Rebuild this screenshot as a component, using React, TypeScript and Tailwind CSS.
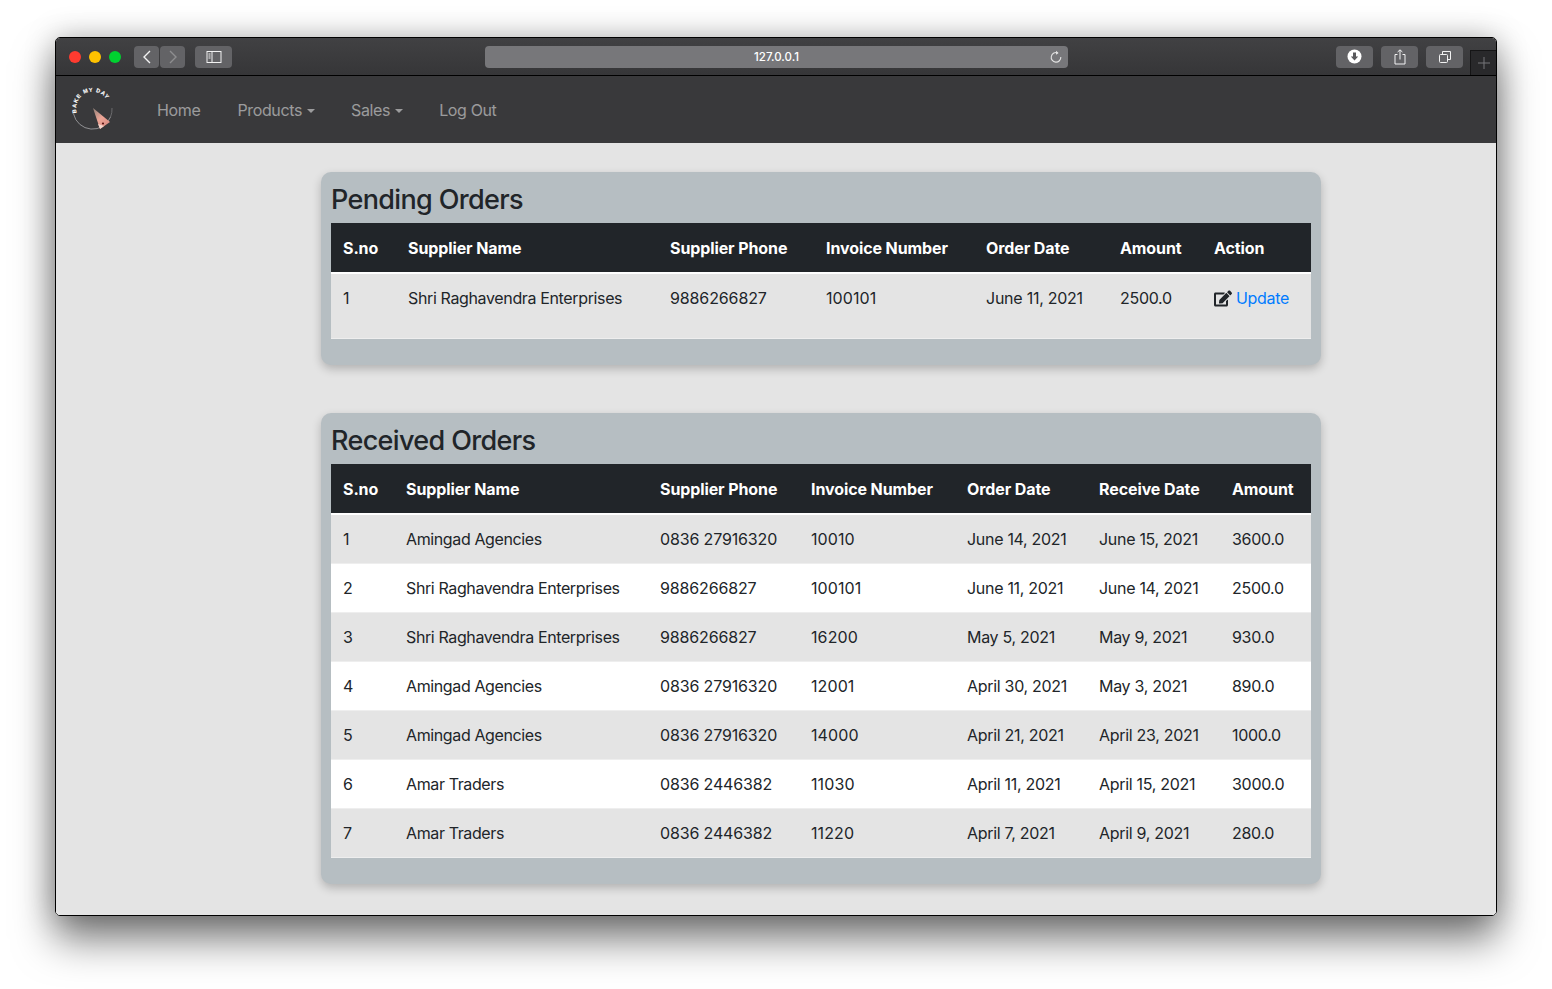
import React from 'react';
import { FaEdit } from 'react-icons/fa';

const pendingCols = ['w-[65px]', 'w-[262px]', 'w-[156px]', 'w-[160px]', 'w-[134px]', 'w-[94px]', 'w-[109px]'];
const receivedCols = ['w-[63px]', 'w-[254px]', 'w-[151px]', 'w-[156px]', 'w-[132px]', 'w-[133px]', 'w-[91px]'];

// body text in the shot runs a little tighter than the installed Inter
const pendingTrack = ['', 'tracking-[-0.36px]', 'tracking-[-0.12px]', 'tracking-[0.1px]', 'tracking-[-0.25px]', 'tracking-[-0.3px]'];
const receivedTrack = ['', 'tracking-[-0.38px]', 'tracking-[-0.15px]', 'tracking-[0.1px]', 'tracking-[-0.3px]', 'tracking-[-0.3px]', 'tracking-[-0.3px]'];

const pendingHead = ['S.no', 'Supplier Name', 'Supplier Phone', 'Invoice Number', 'Order Date', 'Amount', 'Action'];
const receivedHead = ['S.no', 'Supplier Name', 'Supplier Phone', 'Invoice Number', 'Order Date', 'Receive Date', 'Amount'];

const received = [
  ['1', 'Amingad Agencies', '0836 27916320', '10010', 'June 14, 2021', 'June 15, 2021', '3600.0'],
  ['2', 'Shri Raghavendra Enterprises', '9886266827', '100101', 'June 11, 2021', 'June 14, 2021', '2500.0'],
  ['3', 'Shri Raghavendra Enterprises', '9886266827', '16200', 'May 5, 2021', 'May 9, 2021', '930.0'],
  ['4', 'Amingad Agencies', '0836 27916320', '12001', 'April 30, 2021', 'May 3, 2021', '890.0'],
  ['5', 'Amingad Agencies', '0836 27916320', '14000', 'April 21, 2021', 'April 23, 2021', '1000.0'],
  ['6', 'Amar Traders', '0836 2446382', '11030', 'April 11, 2021', 'April 15, 2021', '3000.0'],
  ['7', 'Amar Traders', '0836 2446382', '11220', 'April 7, 2021', 'April 9, 2021', '280.0'],
];

const ToolButton: React.FC<{ className?: string; children: React.ReactNode }> = ({ className = '', children }) => (
  <div className={`flex h-[22px] items-center justify-center rounded-[4px] bg-[#636366] ${className}`}>{children}</div>
);

const TitleBar: React.FC = () => (
  <div className="relative flex h-[38px] shrink-0 items-center border-b border-black bg-gradient-to-b from-[#414143] to-[#363638] pl-[13px]">
    <span className="h-3 w-3 rounded-full bg-[#ff3b30]" />
    <span className="ml-2 h-3 w-3 rounded-full bg-[#ffc200]" />
    <span className="ml-2 h-3 w-3 rounded-full bg-[#00d130]" />
    <ToolButton className="ml-[13px] w-[25px]">
      <svg width="10" height="14" viewBox="0 0 10 14" fill="none" stroke="#f2f2f2" strokeWidth="1.4">
        <path d="M8 1 L2 7 L8 13" />
      </svg>
    </ToolButton>
    <ToolButton className="ml-px w-[25px]">
      <svg width="10" height="14" viewBox="0 0 10 14" fill="none" stroke="#8e8e90" strokeWidth="1.4">
        <path d="M2 1 L8 7 L2 13" />
      </svg>
    </ToolButton>
    <ToolButton className="ml-2.5 w-[37px]">
      <svg width="16" height="12" viewBox="0 0 16 12" fill="none" stroke="#f2f2f2" strokeWidth="1">
        <rect x="1" y="0.5" width="14" height="11" />
        <path d="M6 0.5 V11.5 M2.5 3 H4.5 M2.5 5 H4.5 M2.5 7 H4.5" />
      </svg>
    </ToolButton>
    <div className="relative ml-[253px] flex h-[22px] w-[583px] items-center justify-center rounded-[4px] bg-[#77777a] pt-0.5 font-medium text-white">
      <span className="text-[11.5px]">127.0.0.1</span>
      <svg className="absolute right-[5px] top-[4px]" width="14" height="14" viewBox="0 0 14 14" fill="none" stroke="#e2e2e2" strokeWidth="1.1">
        <path d="M8.8 2.9 A4.8 4.8 0 1 0 11.8 7" />
        <path d="M7 0.8 L9.6 2.9 L7 4.8" fill="#e2e2e2" stroke="none" />
      </svg>
    </div>
    <ToolButton className="ml-[268px] w-[37px]">
      <svg width="15" height="15" viewBox="0 0 15 15">
        <circle cx="7.5" cy="7.5" r="7" fill="#fff" />
        <path d="M6 3.5 H9 V7.5 H11.2 L7.5 11.5 L3.8 7.5 H6 Z" fill="#59595c" />
      </svg>
    </ToolButton>
    <ToolButton className="ml-2 w-[37px]">
      <svg width="12" height="16" viewBox="0 0 12 16" fill="none" stroke="#f2f2f2" strokeWidth="1">
        <path d="M3.5 5.5 H1 V15 H11 V5.5 H8.5" />
        <path d="M6 10.5 V1 M3.6 3 L6 0.8 L8.4 3" />
      </svg>
    </ToolButton>
    <ToolButton className="ml-2 w-[37px]">
      <svg width="12" height="12" viewBox="0 0 12 12" fill="none" stroke="#f2f2f2" strokeWidth="1">
        <rect x="0.5" y="3.5" width="8" height="8" rx="1" />
        <path d="M3.5 3.5 V0.5 H11.5 V8.5 H8.5" />
      </svg>
    </ToolButton>
    <div className="absolute bottom-0 right-0 flex h-[25px] w-[26px] items-center justify-center border-l border-t border-[#151516] bg-[#29292b]">
      <svg width="12" height="12" viewBox="0 0 12 12" stroke="#77777a" strokeWidth="1">
        <path d="M6 0 V12 M0 6 H12" />
      </svg>
    </div>
  </div>
);

const Logo: React.FC = () => (
  <svg width="44" height="44" viewBox="0 0 44 44" className="shrink-0 overflow-visible">
    <defs>
      <path id="logo-arc" d="M5.74 24.8 A16 16 0 0 1 37.4 15.5" />
      <linearGradient id="logo-slice" x1="0" y1="0" x2="0.7" y2="1">
        <stop offset="0" stopColor="#8f8078" />
        <stop offset="0.55" stopColor="#eda596" />
        <stop offset="1" stopColor="#d98a80" />
      </linearGradient>
    </defs>
    <path d="M2.6 26 A19.4 19.4 0 0 0 39.5 29" fill="none" stroke="#a6a6a8" strokeWidth="0.8" />
    <path d="M39.5 29 A19.4 19.4 0 0 0 41 20" fill="none" stroke="#77777a" strokeWidth="0.8" />
    <text fill="#fff" stroke="#fff" strokeWidth="0.15" fontSize="5.5" fontWeight="700" style={{ letterSpacing: '0.85px' }} fontFamily="'Liberation Sans', sans-serif">
      <textPath href="#logo-arc">BAKE MY DAY</textPath>
    </text>
    <path d="M22 20 L39 34 L29 41 Z" fill="url(#logo-slice)" />
    <path d="M27 36 L29 41 L33 38 Z" fill="#f3d5cc" />
    <circle cx="32" cy="35.5" r="1.1" fill="#5a1515" />
  </svg>
);

const Caret: React.FC = () => (
  <span className="ml-[5px] inline-block align-[3px] border-x-[4px] border-t-[4px] border-x-transparent border-t-current" />
);

const NavBar: React.FC = () => (
  <nav className="flex h-[67px] shrink-0 items-center bg-[#39393b] pl-[15px] text-base tracking-[-0.36px] text-white/50">
    <Logo />
    <a className="ml-[42px]">Home</a>
    <a className="ml-[37px]">
      Products
      <Caret />
    </a>
    <a className="ml-[36px]">
      Sales
      <Caret />
    </a>
    <a className="ml-[36px]">Log Out</a>
  </nav>
);

const HeadRow: React.FC<{ cols: string[]; labels: string[]; h: string }> = ({ cols, labels, h }) => (
  <thead>
    <tr className={`bg-[#212529] text-left text-white ${h}`}>
      {labels.map((label, i) => (
        <th key={label} className={`${cols[i]} border-b-2 border-white px-3 font-bold tracking-[-0.1px]`}>
          {label}
        </th>
      ))}
    </tr>
  </thead>
);

const Card: React.FC<{ title: string; children: React.ReactNode; className?: string }> = ({ title, children, className = '' }) => (
  <section className={`w-[1000px] rounded-[10px] bg-[#b6bec2] px-2.5 shadow-[0_4px_10px_rgba(0,0,0,0.22)] ${className}`}>
    <h2 className="flex h-[51px] items-center pt-[3px] text-[27px] font-medium leading-none tracking-[-0.65px] text-[#212529]">{title}</h2>
    {children}
  </section>
);

export default function App() {
  return (
    <div className="h-[989px] w-full overflow-hidden bg-white pl-[55px] pt-[37px] font-['Inter',sans-serif] text-[#212529]">
      <div className="flex h-[879px] w-[1442px] flex-col overflow-hidden rounded-[5px] border border-black shadow-[0_24px_40px_rgba(0,0,0,0.5),0_0_30px_rgba(0,0,0,0.25)]">
        <TitleBar />
        <NavBar />
        <main className="flex flex-1 flex-col items-start bg-[#e4e4e4] pl-[265px] pt-[29px]">
          <Card title="Pending Orders" className="h-[193px]">
            <table className="w-[980px] table-fixed border-collapse text-base">
              <HeadRow cols={pendingCols} labels={pendingHead} h="h-[50px]" />
              <tbody>
                <tr className="h-[65px] border-b border-[#eeeeee] bg-[#e4e4e4] align-top">
                  {['1', 'Shri Raghavendra Enterprises', '9886266827', '100101', 'June 11, 2021', '2500.0'].map((v, i) => (
                    <td key={v} className={`px-3 pt-[12px] ${pendingTrack[i]}`}>
                      {v}
                    </td>
                  ))}
                  <td className="whitespace-nowrap px-3 pt-[12px] tracking-[-0.3px]">
                    <span className="flex items-center">
                      <FaEdit className="mr-[4px] h-[17px] w-[18px]" />
                      <a className="text-[#007bff]">Update</a>
                    </span>
                  </td>
                </tr>
              </tbody>
            </table>
          </Card>
          <Card title="Received Orders" className="mt-12 h-[471px]">
            <table className="w-[980px] table-fixed border-collapse text-base">
              <HeadRow cols={receivedCols} labels={receivedHead} h="h-[50px]" />
              <tbody>
                {received.map((row, i) => (
                  <tr key={row[0]} className={`h-[49px] border-b border-[#eeeeee] ${i % 2 === 0 ? 'bg-[#e4e4e4]' : 'bg-white'}`}>
                    {row.map((v, j) => (
                      <td key={j} className={`px-3 ${receivedTrack[j]}`}>
                        {v}
                      </td>
                    ))}
                  </tr>
                ))}
              </tbody>
            </table>
          </Card>
        </main>
      </div>
    </div>
  );
}
